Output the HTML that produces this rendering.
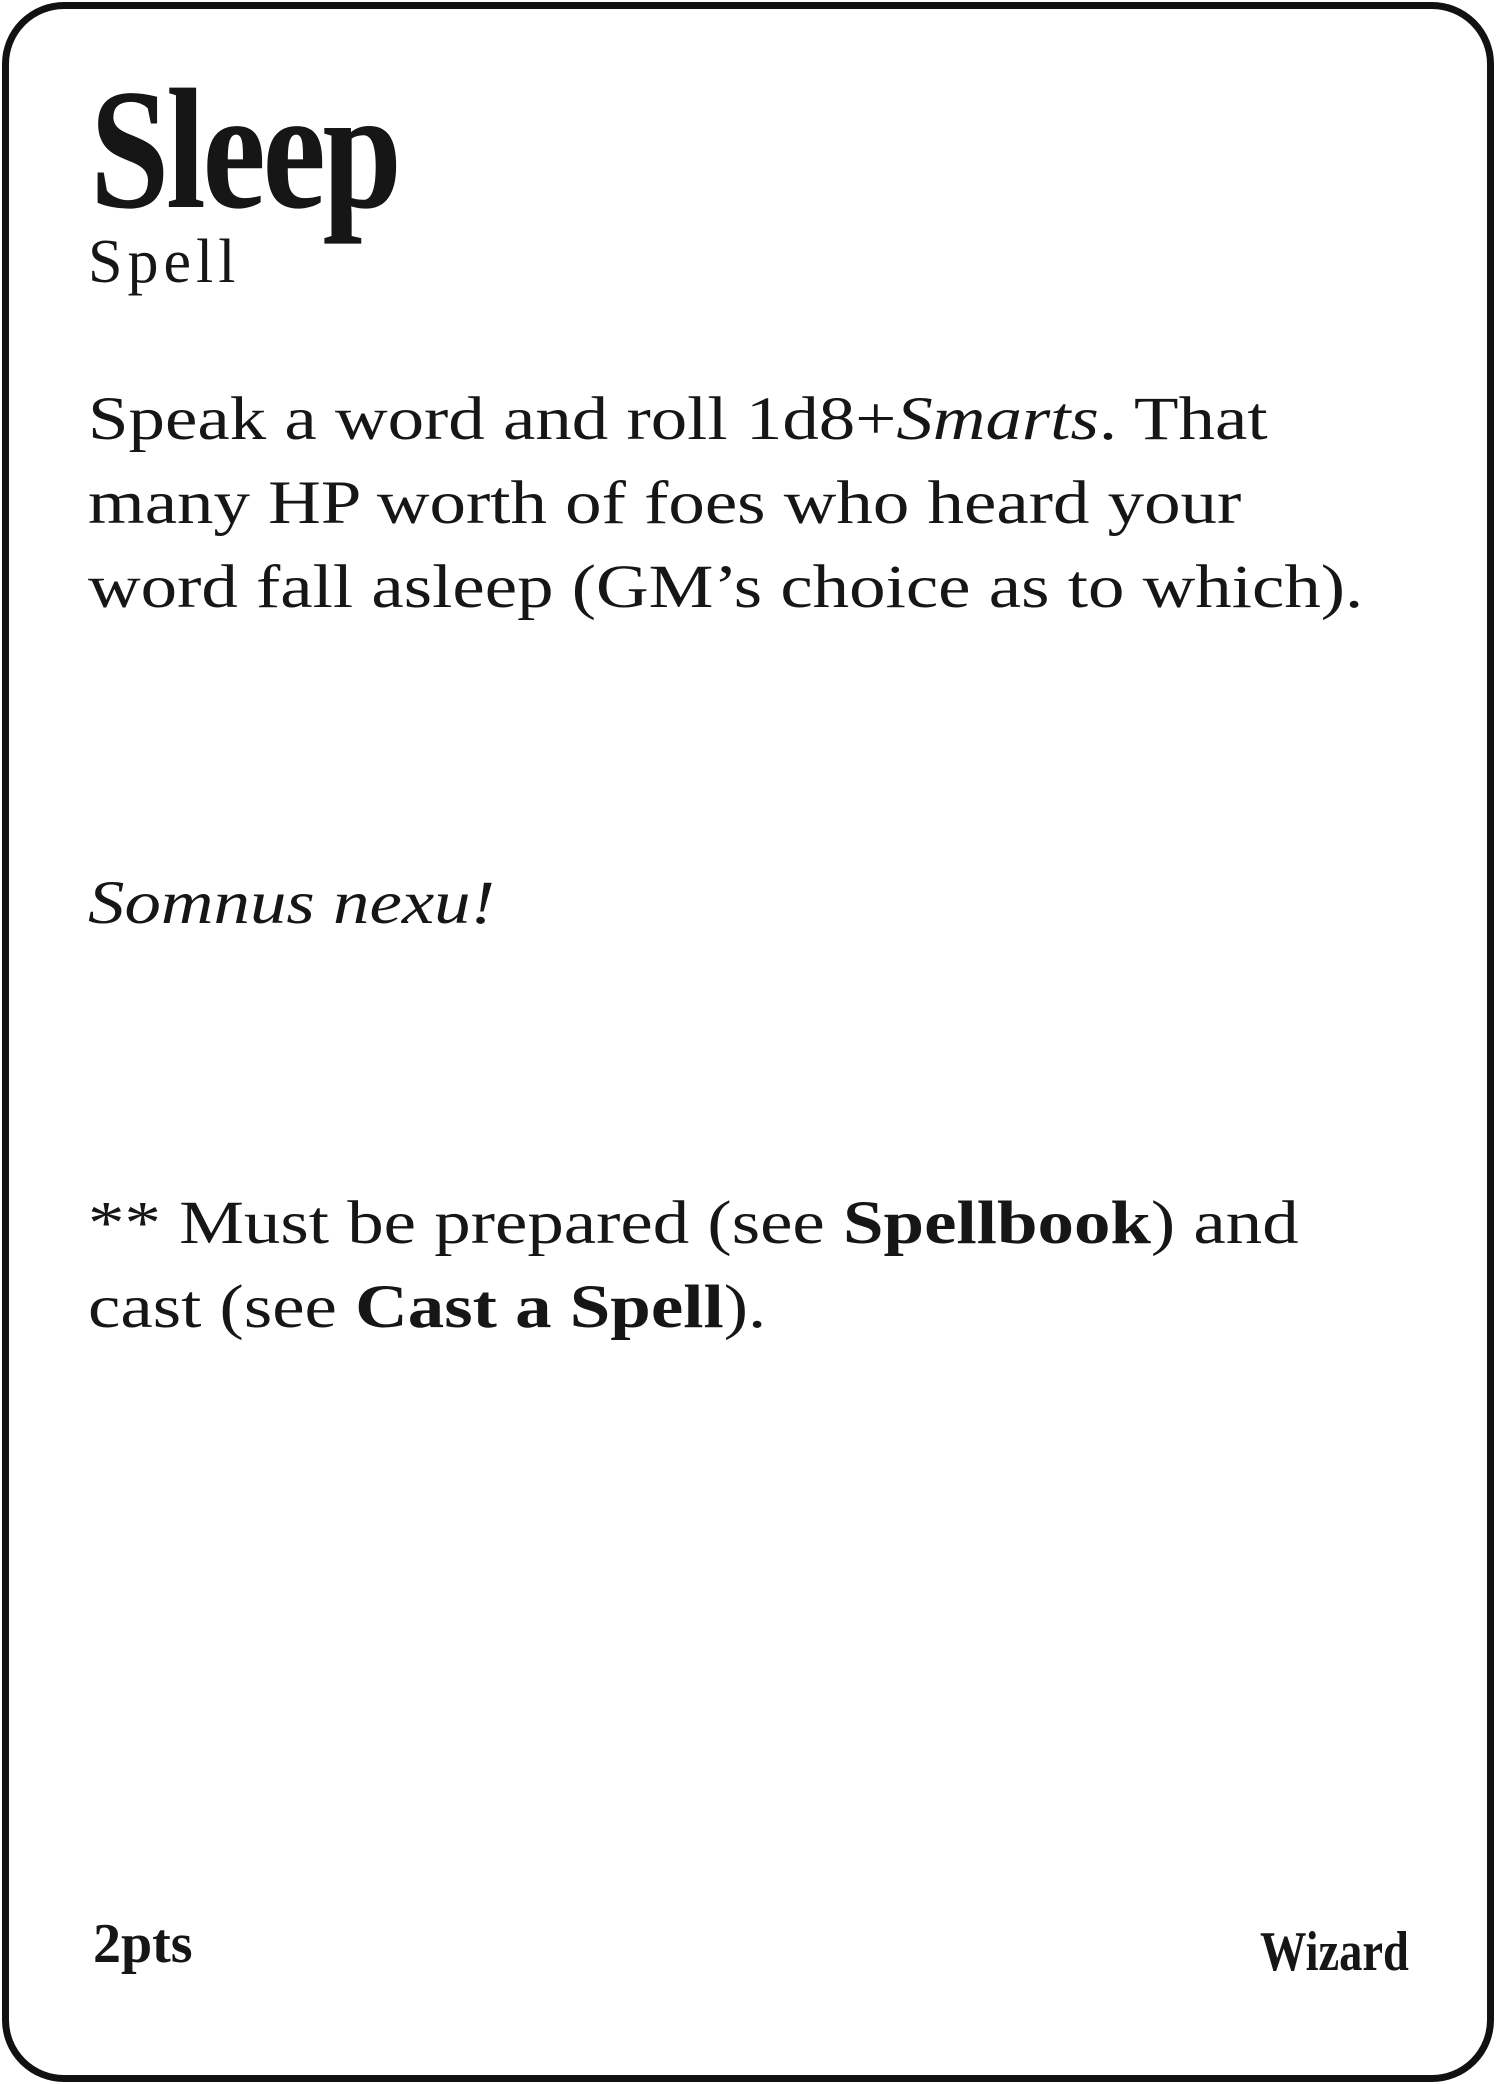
<!DOCTYPE html>
<html><head><style>
html,body{margin:0;padding:0;background:#fff;}
body{width:1496px;height:2084px;position:relative;overflow:hidden;font-family:"Liberation Serif",serif;color:#161616;}
.card{position:absolute;left:2px;top:2px;width:1478px;height:2066px;border:7px solid #111;border-radius:62px;}
.t{position:absolute;white-space:nowrap;}
#title{left:90px;top:40px;font-size:172px;font-weight:bold;transform:scaleX(0.83);transform-origin:left top;letter-spacing:-4px;line-height:220px;}
#sub{left:88px;top:222px;font-size:62px;letter-spacing:5px;line-height:80px;}
.body{font-size:61px;line-height:84px;transform:scaleX(1.195);transform-origin:left top;}
</style></head><body>
<div class="card"></div>
<div class="t" id="title">Sleep</div>
<div class="t" id="sub">Spell</div>
<div class="t body" style="left:88px;top:378px;">Speak a word and roll 1d8+<i>Smarts</i>. That<br>many HP worth of foes who heard your<br>word fall asleep (GM’s choice as to which).</div>
<div class="t body" style="left:88px;top:862px;"><i>Somnus nexu!</i></div>
<div class="t body" style="left:88px;top:1182px;">** Must be prepared (see <b>Spellbook</b>) and<br>cast (see <b>Cast a Spell</b>).</div>
<div class="t" style="left:93px;top:1912px;font-size:56px;font-weight:bold;transform:scaleX(1.0);transform-origin:left top;">2pts</div>
<div class="t" style="left:1260px;top:1920px;font-size:56px;font-weight:bold;transform:scaleX(0.83);transform-origin:left top;">Wizard</div>
</body></html>
